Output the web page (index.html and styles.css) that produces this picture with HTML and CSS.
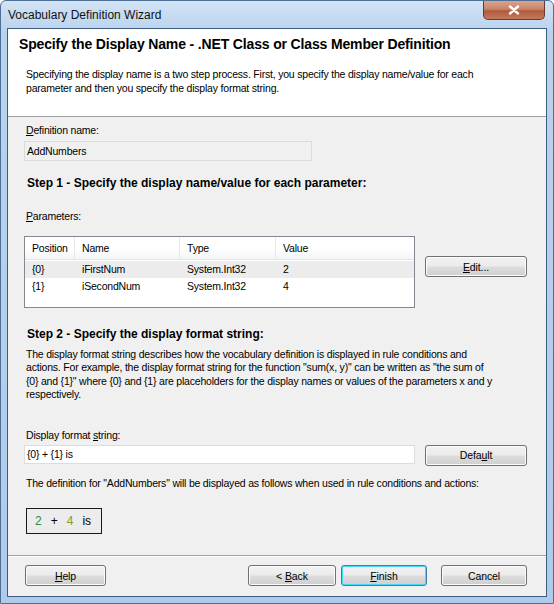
FILE: index.html
```html
<!DOCTYPE html>
<html>
<head>
<meta charset="utf-8">
<link rel="stylesheet" href="styles.css">
</head>
<body>
<div class="window">
  <div class="titlebar">
    <span class="title">Vocabulary Definition Wizard</span>
    <span class="close"><svg width="12" height="10" viewBox="0 0 12 10"><path d="M2 1.5 L10 8.5 M10 1.5 L2 8.5" stroke="#fff" stroke-width="2.4" stroke-linecap="round"/></svg></span>
  </div>
  <div class="client">
    <div class="header">
      <div class="h-title">Specify the Display Name - .NET Class or Class Member Definition</div>
      <div class="h-desc">Specifying the display name is a two step process. First, you specify the display name/value for each<br>parameter and then you specify the display format string.</div>
    </div>
    <div class="body">
      <div class="label"><u>D</u>efinition name:</div>
      <div class="textbox readonly">AddNumbers</div>
      <div class="step step1">Step 1 - Specify the display name/value for each parameter:</div>
      <div class="label params"><u>P</u>arameters:</div>
      <div class="param-row">
        <div class="listview">
          <div class="lv-row lv-head">
            <span class="c1">Position</span><span class="c2">Name</span><span class="c3">Type</span><span class="c4">Value</span>
          </div>
          <div class="lv-row lv-sel">
            <span class="c1">{0}</span><span class="c2">iFirstNum</span><span class="c3">System.Int32</span><span class="c4">2</span>
          </div>
          <div class="lv-row">
            <span class="c1">{1}</span><span class="c2">iSecondNum</span><span class="c3">System.Int32</span><span class="c4">4</span>
          </div>
        </div>
        <button class="btn edit"><u>E</u>dit...</button>
      </div>
      <div class="step step2">Step 2 - Specify the display format string:</div>
      <div class="para">The display format string describes how the vocabulary definition is displayed in rule conditions and<br>actions. For example, the display format string for the function "sum(x, y)" can be written as "the sum of<br>{0} and {1}" where {0} and {1} are placeholders for the display names or values of the parameters x and y<br>respectively.</div>
      <div class="label fmt-label">Display format <u>s</u>tring:</div>
      <div class="fmt-row">
        <div class="textbox fmt">{0} + {1} is</div>
        <button class="btn default">Defa<u>u</u>lt</button>
      </div>
      <div class="label def-text">The definition for "AddNumbers" will be displayed as follows when used in rule conditions and actions:</div>
      <div class="preview"><span class="v1">2</span><span class="op">+</span><span class="v2">4</span><span class="op">is</span></div>
    </div>
    <div class="footer">
      <button class="btn help"><u>H</u>elp</button>
      <div class="spacer"></div>
      <button class="btn back">&lt; <u>B</u>ack</button>
      <button class="btn finish"><u>F</u>inish</button>
      <button class="btn cancel">Cancel</button>
    </div>
  </div>
</div>
</body>
</html>
```
FILE: styles.css
```css
* { box-sizing: border-box; }
html, body { margin: 0; padding: 0; }
body {
  font-family: "Liberation Sans", Arial, sans-serif;
  font-size: 10.5px;
  letter-spacing: -0.2px;
  color: #000;
  background: #fff;
}
.window {
  width: 554px;
  height: 604px;
  background: linear-gradient(180deg, #d2e3f5 0%, #bad3ed 30px, #aecbea 100%);
  border: 1px solid #4d6f95;
  border-radius: 6px 6px 0 0;
  display: flex;
  flex-direction: column;
  padding: 0 6px 6px 6px;
}
.titlebar {
  height: 27px;
  display: flex;
  align-items: flex-start;
  justify-content: space-between;
}
.title {
  font-size: 12px;
  letter-spacing: 0;
  margin-top: 7px;
  margin-left: 1px;
  color: #111;
}
.close {
  width: 62px;
  height: 19px;
  margin-right: 2px;
  border: 1px solid #6b3a2c;
  border-top: none;
  border-radius: 0 0 5px 5px;
  background: linear-gradient(180deg, #dca38f 0%, #c98467 45%, #b05a3e 55%, #c47a5c 100%);
  display: flex;
  align-items: center;
  justify-content: center;
}
.client {
  flex: 1;
  border: 1px solid #3e5c7e;
  background: #f0f0f0;
  display: flex;
  flex-direction: column;
}
.header {
  height: 88px;
  background: #fff;
  border-bottom: 1px solid #a0a0a0;
  padding: 7px 0 0 11px;
}
.h-title {
  font-weight: bold;
  font-size: 14px;
  letter-spacing: -0.15px;
  line-height: 17px;
}
.h-desc {
  margin-top: 14px;
  margin-left: 7px;
  line-height: 14px;
  white-space: nowrap;
}
.body {
  flex: 1;
  padding: 7px 19px 0 16px;
  border-bottom: 1px solid #a0a0a0;
}
.label { line-height: 13px; margin-left: 2px; }
.textbox {
  height: 20px;
  border: 1px solid #abadb3;
  background: #fff;
  line-height: 18px;
  padding-left: 2px;
}
.readonly {
  width: 288px;
  margin-top: 4px;
  background: #f0f0f0;
  border-color: #d9dbde;
}
.step {
  font-weight: bold;
  font-size: 12px;
  letter-spacing: 0;
  line-height: 14px;
  margin-left: 3px;
}
.step1 { margin-top: 15px; }
.label.params { margin-top: 20px; }
.param-row {
  display: flex;
  gap: 10px;
  margin-top: 13px;
}
.listview {
  width: 391px;
  height: 72px;
  border: 1px solid #828790;
  background: #fff;
}
.lv-row {
  display: flex;
  height: 17px;
  line-height: 17px;
}
.lv-head {
  height: 23px;
  line-height: 22px;
  background: linear-gradient(180deg, #fff 0%, #fff 50%, #f4f5f7 100%);
  border-bottom: 1px solid #e2e3e5;
  margin-bottom: 1px;
}
.lv-head span { border-right: 1px solid #e6e7ea; }
.lv-row span { padding-left: 7px; }
.c1 { width: 50px; }
.c2 { width: 105px; }
.c3 { width: 96px; }
.c4 { width: 80px; }
.lv-head .c4 { border-right: none; }
.lv-sel { background: #ececec; }
.btn {
  font-family: "Liberation Sans", Arial, sans-serif;
  font-size: 10.5px;
  letter-spacing: -0.1px;
  color: #000;
  width: 102px;
  height: 21px;
  border: 1px solid #707070;
  border-radius: 3px;
  background: linear-gradient(180deg, #f2f2f2 0%, #ebebeb 48%, #dddddd 52%, #cfcfcf 100%);
  box-shadow: inset 0 0 0 1px #fcfcfc;
  padding: 0;
  margin: 0;
}
.btn.edit { margin-top: 20px; }
.step2 { margin-top: 19px; }
.para {
  margin-top: 7px;
  margin-left: 2px;
  line-height: 13.4px;
  white-space: nowrap;
}
.fmt-label { margin-top: 27px; }
.fmt-row {
  display: flex;
  gap: 10px;
  margin-top: 3px;
}
.textbox.fmt {
  width: 391px;
  height: 19px;
  line-height: 17px;
  border-color: #dcdcdc;
}
.def-text { margin-top: 11px; }
.preview {
  margin-top: 18px;
  margin-left: 2px;
  width: 76px;
  height: 26px;
  border: 1px solid #1a1a1a;
  background: #ececec;
  display: flex;
  align-items: center;
  padding-left: 8px;
  gap: 9px;
  font-size: 12px;
  letter-spacing: 0;
}
.v1 { color: #2f8a3c; }
.v2 { color: #8e9a1c; }
.footer {
  height: 40px;
  border-top: 1px solid #fff;
  display: flex;
  align-items: flex-start;
  padding: 8px 19px 0 17px;
}
.spacer { flex: 1; }
.btn.help { width: 81px; }
.btn.back { width: 88px; }
.btn.finish {
  width: 86px;
  margin-left: 5px;
  border-color: #3c7fb1;
  box-shadow: inset 0 0 0 1px #48d7f9;
}
.btn.cancel { width: 86px; margin-left: 14px; }
```
